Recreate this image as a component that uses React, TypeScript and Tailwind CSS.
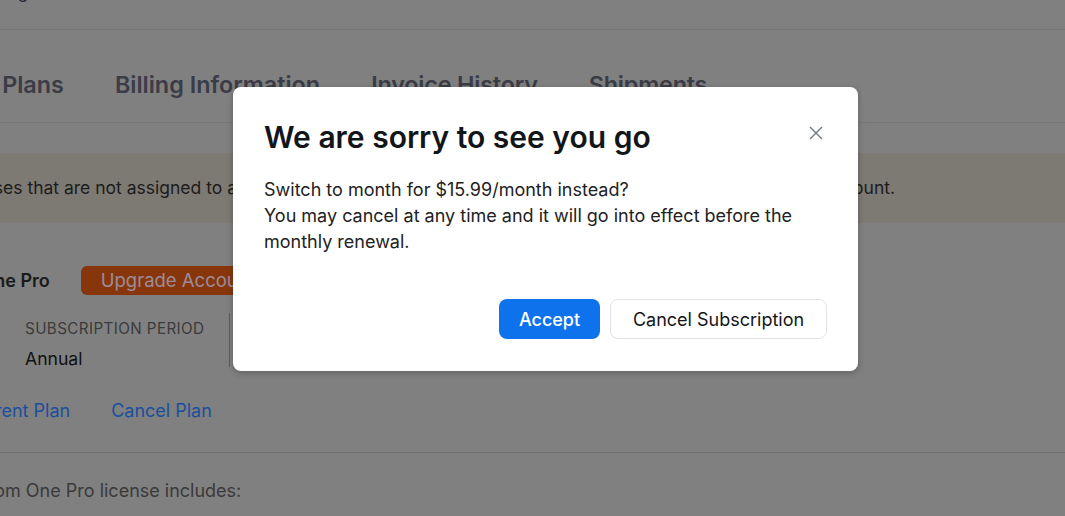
import React from "react";

export default function App() {
  return (
    <div
      className="relative h-[516px] w-[1065px] overflow-hidden bg-[#808080]"
      style={{ fontFamily: "Inter, 'Noto Sans', sans-serif" }}
    >
      {/* Underlying page (dimmed) */}
      <div className="flex flex-col">
        <div className="h-[30px] overflow-hidden border-b border-[#777777]">
          <div className="-ml-[20px] -mt-[20px] text-[17px] leading-[24px] text-[#2a2a35]">Billing</div>
        </div>

        <div className="-ml-[90px] flex h-[93px] items-start gap-[51px] border-b border-[#787878] pt-[39px] text-[23.4px] font-semibold leading-[32px] text-[#3c3c47]">
          <span>Current Plans</span>
          <span>Billing Information</span>
          <span className="tracking-[-0.2px]">Invoice History</span>
          <span className="tracking-[-0.2px]">Shipments</span>
        </div>

        <div className="mt-[30px] flex h-[70px] items-center bg-[#7d7973] text-[17.5px] text-[#1c1c1c]">
          <div className="-ml-[126px] flex w-[1021px] justify-between whitespace-nowrap">
            <span>You have licenses that are not assigned to any users in your account.</span>
            <span>account.</span>
          </div>
        </div>

        <div className="-ml-[74px] mt-[43px] flex h-[29px] items-center gap-[31px]">
          <span className="text-[18px] font-semibold text-[#1a1a1a]">Zoom One Pro</span>
          <span className="flex h-[29px] items-center whitespace-nowrap rounded-[6px] bg-[#87360c] px-[20px] text-[18.5px] text-[#9c8c9a]">
            Upgrade Account
          </span>
        </div>

        <div className="mt-[24px] flex items-start">
          <div className="flex flex-col pl-[25px] pr-[25px]">
            <span className="text-[15.2px] leading-[20px] tracking-[0.4px] text-[#3b3b3b]">SUBSCRIPTION PERIOD</span>
            <span className="mt-[8px] text-[17.6px] leading-[24px] text-[#111111]">Annual</span>
          </div>
          <div className="-mt-[6px] h-[54px] w-px bg-[#5f5f5f]" />
        </div>

        <div className="-ml-[107px] mt-[28px] flex gap-[41px] text-[18px] leading-[24px] text-[#1a4f9e]">
          <span>Change Current Plan</span>
          <span>Cancel Plan</span>
        </div>

        <div className="mt-[29px] border-t border-[#6e6e6e]" />

        <div className="-ml-[72px] mt-[26px] text-[18px] leading-[24px] text-[#3a3a3a]">
          Your Zoom One Pro license includes:
        </div>
      </div>

      {/* Modal */}
      <div className="absolute left-[233px] top-[87px] w-[625px] rounded-[8px] bg-white pb-[32px] pl-[31px] pr-[31px] pt-[32px] shadow-[0_2px_6px_rgba(0,0,0,0.25)]">
        <div className="flex items-start justify-between">
          <h2 className="text-[30px] font-semibold leading-[36px] text-[#131619]">
            We are sorry to see you go
          </h2>
          <button className="mr-[3px] mt-[6px] text-[#6e7680]" aria-label="Close">
            <svg width="16" height="16" viewBox="0 0 16 16" fill="none" stroke="currentColor" strokeWidth="1.4">
              <path d="M2 2L14 14M14 2L2 14" />
            </svg>
          </button>
        </div>
        <p className="mt-[22px] text-[18px] leading-[26px] text-[#222222]">
          Switch to month for $15.99/month instead?
          <br />
          You may cancel at any time and it will go into effect before the monthly renewal.
        </p>
        <div className="mt-[44px] flex justify-end gap-[10px]">
          <button className="h-[40px] w-[101px] rounded-[8px] bg-[#0e72ed] text-[18px] font-medium text-white">
            Accept
          </button>
          <button className="h-[40px] w-[217px] rounded-[8px] border border-[#dfe3e8] bg-white text-[18px] text-[#131619]">
            Cancel Subscription
          </button>
        </div>
      </div>
    </div>
  );
}
